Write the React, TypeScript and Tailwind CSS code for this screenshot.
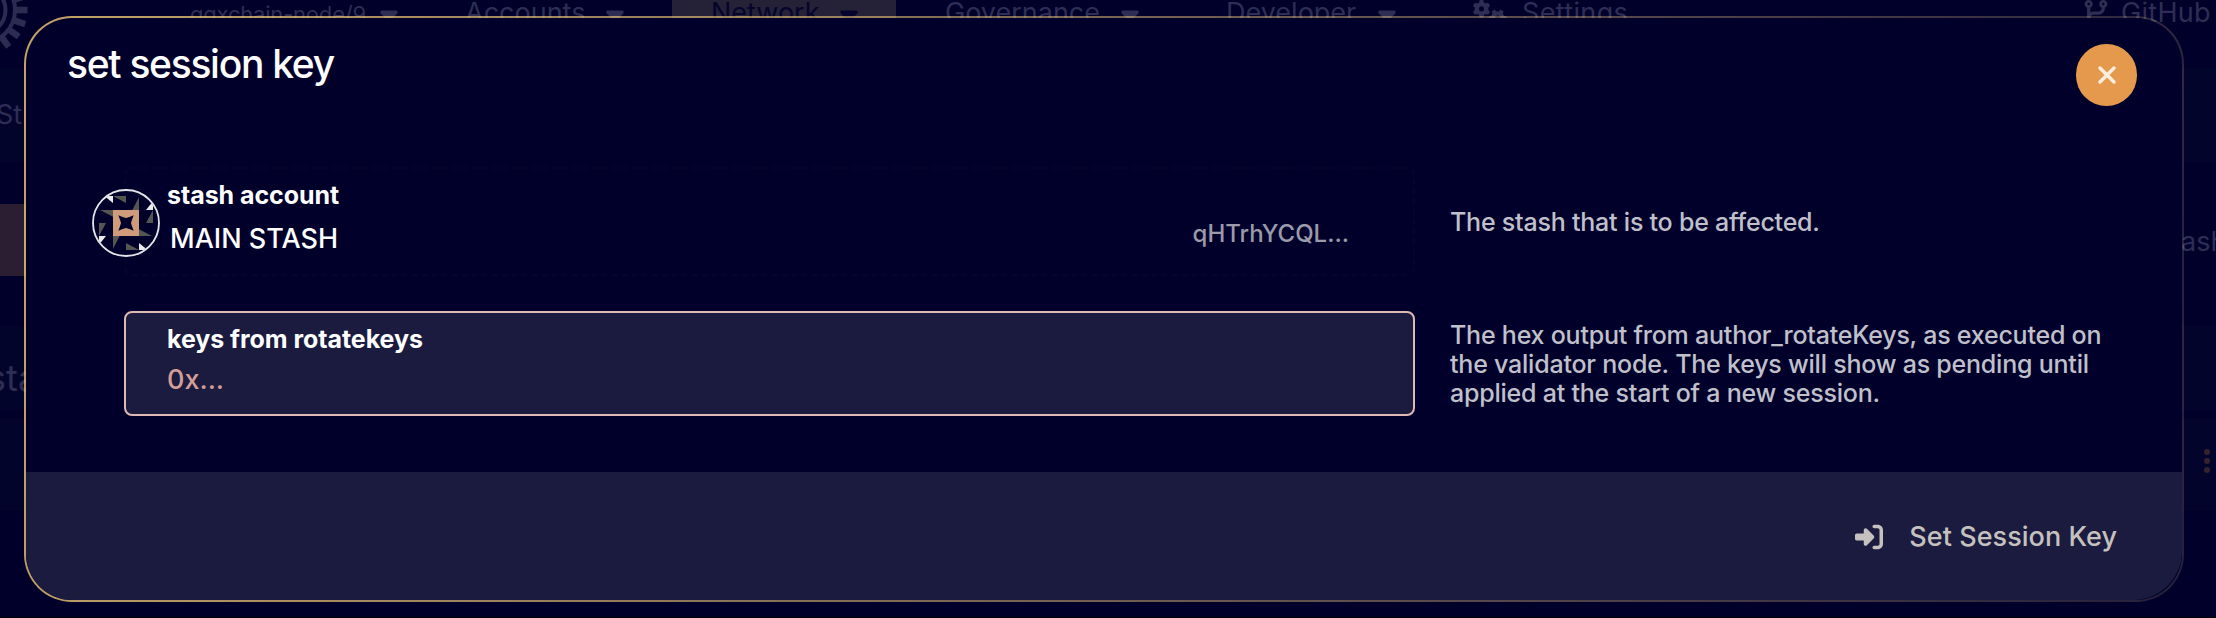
import type { ReactNode } from "react";
import { FaCaretDown, FaCodeBranch, FaGears, FaRightToBracket } from "react-icons/fa6";

const rotations = [0, 90, 180, 270];
const teeth = Array.from({ length: 20 }, (_, i) => i * 18);

function Identicon() {
  return (
    <svg viewBox="-102 -102 204 204" className="size-[68px]">
      <circle r="99" fill="#00002b" stroke="#e4e4e8" strokeWidth="5.5" />
      <clipPath id="disc">
        <circle r="97" />
      </clipPath>
      <g clipPath="url(#disc)">
        {rotations.map((r) => (
          <g key={r} transform={`rotate(${r})`}>
            <path d="M-65 -81H-39V-60Z" fill="#ebebeb" />
            <path d="M-39 -81H0V-60Z" fill="#555552" />
            <path d="M-78 -39H-39V-19Z" fill="#555552" />
          </g>
        ))}
        <rect x="-39" y="-39" width="78" height="78" fill="#cf9c7b" />
        <path
          d="M-23 -23L-10 -18L0 -15L10 -18L23 -23L18 -10L15 0L18 10L23 23L10 18L0 15L-10 18L-23 23L-18 10L-15 0L-18 -10Z"
          fill="#00002b"
        />
      </g>
    </svg>
  );
}

function Gear() {
  return (
    <svg viewBox="0 0 28 54" className="h-[54px] w-[28px]">
      <g transform="translate(-18 11)" fill="none" stroke="#2c2c52">
        <circle r="23.5" strokeWidth="4" />
        <circle r="33" strokeWidth="4" />
        {teeth.map((a) => (
          <path key={a} d="M33 0H45.5" strokeWidth="6.5" transform={`rotate(${a})`} />
        ))}
      </g>
    </svg>
  );
}

function NavItem({ label, gap = "gap-[18px]" }: { label: string; gap?: string }) {
  return (
    <div className={`flex items-center ${gap}`}>
      <span>{label}</span>
      <FaCaretDown className="mt-[1px] size-[28px]" />
    </div>
  );
}

function Backdrop() {
  return (
    <div className="flex h-[618px] flex-col border-b border-black text-[27px] leading-[34px] text-[#2e2e54]">
      <header className="h-[68px] overflow-hidden">
        <nav className="-mt-[4px] grid h-[59px] grid-cols-[190px_275px_207px_273px_281px_247px_610px_133px] items-start">
          <div className="mt-[3px]">
            <Gear />
          </div>
          <div className="flex items-center gap-[9px] pt-[1px] text-[22px] tracking-[-0.2px]">
            <span>ggxchain-node/9</span>
            <FaCaretDown className="size-[28px]" />
          </div>
          <NavItem label="Accounts" gap="gap-[16px]" />
          <div className="h-[34px] w-[224px] bg-[#252137] pl-[39px] text-[#04042c]">
            <NavItem label="Network" gap="gap-[15px]" />
          </div>
          <NavItem label="Governance" gap="gap-[16px]" />
          <NavItem label="Developer" gap="gap-[17px]" />
          <div className="flex items-center gap-[15px]">
            <FaGears className="size-[34px]" />
            <span className="tracking-[0.35px]">Settings</span>
          </div>
          <div className="flex items-center gap-[12px]">
            <FaCodeBranch className="size-[26px]" />
            <span className="tracking-[0.3px]">GitHub</span>
          </div>
        </nav>
      </header>
      <div className="h-[94px] bg-[#03042c] pt-[30px]">
        <div className="-ml-[4px]">St</div>
      </div>
      <div className="flex h-[163px] items-start justify-between pt-[42px]">
        <div className="h-[72px] w-[60px] bg-[#2b1d32]" />
        <div className="mt-[21px] w-[35px] overflow-hidden">ash</div>
      </div>
      <div className="h-[86px] bg-[#03042c] pt-[33px] text-[36px] leading-[40px]">
        <div className="-ml-[13px]">stash</div>
      </div>
      <div className="mt-[7px] flex h-[93px] items-start justify-end bg-[#03042c] pt-[31px] pr-[6px]">
        <div className="flex flex-col gap-[2.8px]">
          <i className="size-[6px] rounded-full bg-[#35222f]" />
          <i className="size-[6px] rounded-full bg-[#35222f]" />
          <i className="size-[6px] rounded-full bg-[#35222f]" />
        </div>
      </div>
    </div>
  );
}

function Help({ children }: { children: ReactNode }) {
  return (
    <p className="w-[680px] pt-[2px] text-[25px] leading-[29px] font-[450] tracking-[-0.22px] text-[#c0c0cb]">
      {children}
    </p>
  );
}

export default function App() {
  return (
    <div className="relative h-[618px] w-[2216px] overflow-hidden bg-[#00002b] font-['Inter',sans-serif]">
      <Backdrop />
      <div className="absolute top-[16px] left-[24px] h-[586px] w-[2160px] rounded-[48px] bg-[linear-gradient(100deg,rgba(255,212,121,0.77),rgba(255,212,160,0.15))] p-[2px]">
        <div className="flex h-full flex-col overflow-hidden rounded-[46px] bg-[#00002b]">
          <div className="flex h-[149px] items-start justify-between pt-[22px] pr-[45px] pl-[41px]">
            <h1 className="text-[39px] leading-[48px] font-[450] tracking-[-1.3px] text-white">set session key</h1>
            <button className="mt-[4px] flex h-[62px] w-[61px] items-center justify-center rounded-full bg-[#e5994d]">
              <svg viewBox="0 0 18 18" className="size-[18px]" stroke="#fbeee0" strokeWidth="3.4" strokeLinecap="round">
                <path d="M2 2L16 16M16 2L2 16" />
              </svg>
            </button>
          </div>

          <div className="flex flex-1 flex-col gap-[35px] pl-[98px]">
            <div className="flex items-center gap-[35px]">
              <div className="relative h-[109px] w-[1291px] rounded-[8px] border-2 border-dashed border-[#05052b] pt-[11px] pr-[64px] pl-[41px]">
                <div className="absolute top-[20px] -left-[34px]">
                  <Identicon />
                </div>
                <div className="text-[25px] leading-[30px] font-[650] tracking-[-0.05px] text-white">stash account</div>
                <div className="mt-[12px] flex items-start justify-between pl-[3px]">
                  <span className="text-[27px] leading-[34px] font-[450] text-white">MAIN STASH</span>
                  <span className="-mt-[3px] text-[24px] leading-[30px] font-[450] text-[#9a9aaa]">qHTrhYCQL...</span>
                </div>
              </div>
              <Help>The stash that is to be affected.</Help>
            </div>

            <div className="flex items-center gap-[35px]">
              <div className="h-[105px] w-[1291px] rounded-[8px] border-2 border-[#dfb9b3] bg-[#1a1b3f] pt-[11px] pl-[41px]">
                <div className="text-[25px] leading-[30px] font-[650] tracking-[-0.05px] text-white">
                  keys from rotatekeys
                </div>
                <div className="mt-[9px] text-[27px] leading-[34px] font-[450] text-[#d49d98]">0x...</div>
              </div>
              <Help>
                The hex output from author_rotateKeys, as executed on
                <br />
                the validator node. The keys will show as pending until
                <br />
                applied at the start of a new session.
              </Help>
            </div>
          </div>

          <div className="flex h-[128px] items-center justify-end rounded-br-[49px] bg-[#1a1b3f] pt-[1px] pr-[65px]">
            <button className="flex items-center gap-[26px] text-[27px] leading-[34px] font-[450] tracking-[0.05px] text-[#c5c1be]">
              <FaRightToBracket className="size-[28px]" />
              <span>Set Session Key</span>
            </button>
          </div>
        </div>
      </div>
    </div>
  );
}
